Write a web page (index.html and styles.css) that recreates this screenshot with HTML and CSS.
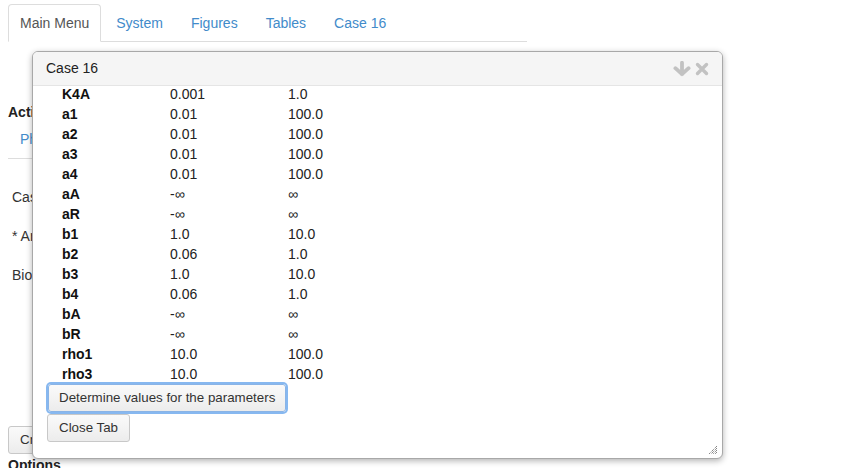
FILE: index.html
```html
<!DOCTYPE html>
<html>
<head>
<meta charset="utf-8">
<link rel="stylesheet" href="styles.css">
</head>
<body>
<div class="page">
  <ul class="tabs">
    <li class="tab active"><span>Main Menu</span></li>
    <li class="tab"><span class="link">System</span></li>
    <li class="tab"><span class="link">Figures</span></li>
    <li class="tab"><span class="link">Tables</span></li>
    <li class="tab"><span class="link">Case 16</span></li>
  </ul>
  <div class="pane">
    <div class="heading">Actions</div>
    <div class="pill link">Phenotypes</div>
    <div class="rule"></div>
    <div class="line first">Case 16</div>
    <div class="line">* Arbitrary</div>
    <div class="line">Biological</div>
    <button class="btn bg-btn">Create</button>
    <div class="heading options">Options</div>
  </div>
</div>

<div class="dialog">
  <div class="dialog-head">
    <span class="dialog-title">Case 16</span>
    <span class="dialog-icons">
      <svg width="18" height="16" viewBox="0 0 18 16"><path d="M9 1.8V13.2M2.4 7.2L9 13.2L15.6 7.2" fill="none" stroke="#c2c2c2" stroke-width="3.8" stroke-linecap="round" stroke-linejoin="round"/></svg>
      <svg width="14" height="14" viewBox="0 0 14 14"><path d="M2.5 2.5L11.5 11.5M11.5 2.5L2.5 11.5" fill="none" stroke="#c2c2c2" stroke-width="3.4" stroke-linecap="round"/></svg>
    </span>
  </div>
  <div class="dialog-body">
    <div class="scroller">
      <div class="params">
        <b>K4A</b><span>0.001</span><span>1.0</span>
        <b>a1</b><span>0.01</span><span>100.0</span>
        <b>a2</b><span>0.01</span><span>100.0</span>
        <b>a3</b><span>0.01</span><span>100.0</span>
        <b>a4</b><span>0.01</span><span>100.0</span>
        <b>aA</b><span>-∞</span><span>∞</span>
        <b>aR</b><span>-∞</span><span>∞</span>
        <b>b1</b><span>1.0</span><span>10.0</span>
        <b>b2</b><span>0.06</span><span>1.0</span>
        <b>b3</b><span>1.0</span><span>10.0</span>
        <b>b4</b><span>0.06</span><span>1.0</span>
        <b>bA</b><span>-∞</span><span>∞</span>
        <b>bR</b><span>-∞</span><span>∞</span>
        <b>rho1</b><span>10.0</span><span>100.0</span>
        <b>rho3</b><span>10.0</span><span>100.0</span>
      </div>
      <div class="actions">
        <button class="btn focus">Determine values for the parameters</button>
        <button class="btn">Close Tab</button>
      </div>
    </div>
    <svg class="grip" width="10" height="10" viewBox="0 0 10 10"><path d="M9 1L1 9M9 3L3 9M9 5L5 9M9 7L7 9" stroke="#555" stroke-width="1" stroke-dasharray="1 1"/></svg>
  </div>
</div>
</body>
</html>
```

FILE: styles.css
```css
* { box-sizing: border-box; }
html, body { margin: 0; padding: 0; background: #fff; }
body {
  font-family: "Liberation Sans", Arial, sans-serif;
  font-size: 14px;
  line-height: 20px;
  color: #333;
  width: 853px;
  height: 468px;
  overflow: hidden;
  position: relative;
}
.page { padding: 4px 0 0 8px; width: 527px; }
.link { color: #428bca; }
.tabs {
  list-style: none;
  margin: 0;
  padding: 0;
  display: flex;
  border-bottom: 1px solid #ddd;
  height: 38px;
}
.tab {
  padding: 8px 12px;
  margin-right: 2px;
  border: 1px solid transparent;
  border-radius: 4px 4px 0 0;
  height: 38px;
  margin-bottom: -1px;
}
.tab.active {
  border-color: #ddd;
  border-bottom-color: #fff;
  background: #fff;
  color: #555;
  padding: 8px 11px;
}
.pane { display: flex; flex-direction: column; align-items: flex-start; }
.heading { font-weight: bold; color: #222; margin-top: 60px; }
.pill { margin-top: 7px; padding-left: 12px; }
.rule { align-self: stretch; border-top: 1px solid #ddd; margin-top: 9px; }
.line { margin-top: 19px; padding-left: 4px; }
.line.first { margin-top: 28px; }
.bg-btn { margin-top: 141px; height: 30px; }
.options { margin-top: 1px; }

.btn {
  font-family: "Liberation Sans", Arial, sans-serif;
  font-size: 13.33px;
  line-height: 16px;
  color: #333;
  padding: 5px 11px;
  height: 28px;
  border: 1px solid #c8c8c8;
  border-radius: 3px;
  background: linear-gradient(#fafafa, #ececec);
  display: block;
}
.btn.focus {
  box-shadow: 0 0 0 2px rgba(95, 160, 235, 0.75);
  border-color: #8ab4e6;
  padding: 5px 10px;
  margin-left: 1px;
}

.dialog {
  position: absolute;
  left: 32px;
  top: 51px;
  width: 691px;
  height: 408px;
  border: 1px solid #a8a8a8;
  border-radius: 6px;
  box-shadow: 0 2px 6px rgba(0, 0, 0, 0.3);
  background: #fff;
  display: flex;
  flex-direction: column;
  overflow: hidden;
}
.dialog-head {
  height: 34px;
  background: #f5f5f5;
  border-bottom: 1px solid #e5e5e5;
  display: flex;
  align-items: center;
  justify-content: space-between;
  padding: 0 13px 0 13px;
  flex: none;
}
.dialog-title { color: #222; margin-top: -1px; }
.dialog-icons { display: flex; align-items: center; gap: 4px; margin-top: 0; }
.dialog-icons svg { display: block; }
.dialog-body { flex: 1; position: relative; overflow: hidden; }
.scroller { margin-top: -2px; padding-left: 14px; }
.params {
  display: grid;
  grid-template-columns: 108px 118px 100px;
  margin-left: 15px;
  color: #111;
}
.params b { color: #111; }
.params span { color: #222; }
.actions { display: flex; flex-direction: column; align-items: flex-start; gap: 2px; }
.grip { position: absolute; right: 4px; bottom: 3px; }
```
